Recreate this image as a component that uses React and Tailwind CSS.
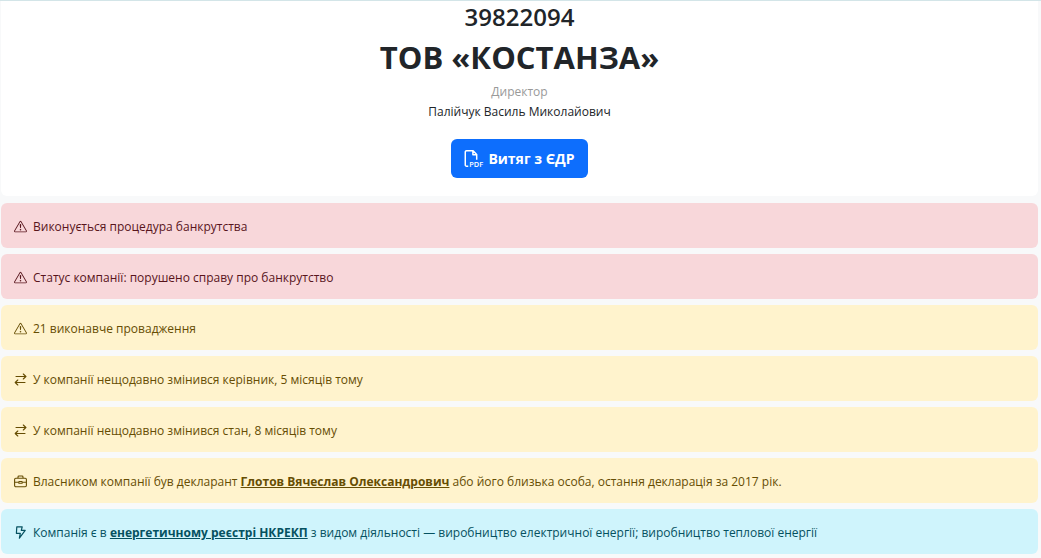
import { BsExclamationTriangle } from 'react-icons/bs';

const TONES = {
    danger: 'bg-[#f8d7da] text-[#58151c]',
    warning: 'bg-[#fff3cd] text-[#664d03]',
    info: 'bg-[#cff4fc] text-[#055160]',
};

const ALERTS = [
    { id: 'bankruptcy', tone: 'danger', icon: BsExclamationTriangle, text: 'Виконується процедура банкрутства' },
    { id: 'status', tone: 'danger', icon: BsExclamationTriangle, text: 'Статус компанії: порушено справу про банкрутство' },
    { id: 'enforcement', tone: 'warning', icon: BsExclamationTriangle, text: '21 виконавче провадження' },
    { id: 'director', tone: 'warning', icon: SwapIcon, text: 'У компанії нещодавно змінився керівник, 5 місяців тому' },
    { id: 'state', tone: 'warning', icon: SwapIcon, text: 'У компанії нещодавно змінився стан, 8 місяців тому' },
    {
        id: 'owner',
        tone: 'warning',
        icon: BriefcaseIcon,
        text: (
            <>
                Власником компанії був декларант <AlertLink>Глотов Вячеслав Олександрович</AlertLink> або його близька особа, остання декларація за 2017 рік.
            </>
        ),
    },
    {
        id: 'energy',
        tone: 'info',
        icon: BoltIcon,
        text: (
            <>
                Компанія є в <AlertLink>енергетичному реєстрі НКРЕКП</AlertLink> з видом діяльності — виробництво електричної енергії; виробництво теплової енергії
            </>
        ),
    },
];

function SwapIcon(props) {
    return (
        <svg viewBox="0 0 13 13" fill="none" stroke="currentColor" strokeWidth="1.1" strokeLinecap="round" strokeLinejoin="round" {...props}>
            <path d="M2 3.5h10M9.3 1l2.6 2.5L9.3 6M11 9.5H1.2M3.8 7 1.2 9.5 3.8 12" />
        </svg>
    );
}

function BriefcaseIcon(props) {
    return (
        <svg viewBox="0 0 13 13" fill="none" stroke="currentColor" strokeWidth="1.1" strokeLinejoin="round" {...props}>
            <rect x="0.6" y="3.2" width="11.8" height="8.6" rx="1.2" />
            <path d="M4 3V1.9c0-.5.3-.9.9-.9h3.2c.6 0 .9.4.9.9V3M.6 7.3h4M8.4 7.3h4" />
            <rect x="4.8" y="6.5" width="3.4" height="1.8" rx="0.4" />
        </svg>
    );
}

function BoltIcon(props) {
    return (
        <svg viewBox="0 0 13 13" fill="none" stroke="currentColor" strokeWidth="1.2" strokeLinejoin="round" {...props}>
            <path d="M2.8.8h5.4L7.3 4.4h3.9L5.4 12.2l.9-4.9H2.4z" />
        </svg>
    );
}

function PdfIcon(props) {
    return (
        <svg viewBox="0 0 17 17" fill="none" stroke="currentColor" strokeWidth="1.4" strokeLinejoin="round" overflow="visible" {...props}>
            <path d="M4 15.3H2.4a1.2 1.2 0 0 1-1.2-1.2V1.9A1.2 1.2 0 0 1 2.4.7h6.2L12 4.2v5M8.4.9v3.5h3.5" />
            <text x="5" y="16" fill="currentColor" stroke="none" fontSize="7" fontWeight="600">
                PDF
            </text>
        </svg>
    );
}

function AlertLink({ children }) {
    return (
        <a href="#" className="font-bold underline">
            {children}
        </a>
    );
}

function Alert({ tone, icon: Icon, children }) {
    return (
        <div role="alert" className={`flex items-center gap-1.5 rounded-md px-[13px] pt-[13px] pb-[11px] text-xs leading-[21px] ${TONES[tone]}`}>
            <Icon className="size-[13px] shrink-0" aria-hidden="true" />
            <p>{children}</p>
        </div>
    );
}

export default function App() {
    return (
        <div className="min-h-screen border-t border-[#d3e5e8] bg-[#f8f9fa] pr-[3px] pl-px font-['Open_Sans',sans-serif] text-[#212529]">
            <header className="flex flex-col items-center rounded-b-md bg-white pb-[18px] text-center">
                <h2 className="text-2xl leading-[31px] font-semibold">39822094</h2>
                <h1 className="text-[31px] leading-[50px] font-bold">ТОВ «КОСТАНЗА»</h1>
                <p className="text-xs leading-5 text-[#999999]">Директор</p>
                <p className="text-xs leading-5">Палійчук Василь Миколайович</p>
                <button type="button" className="mt-[17px] flex h-[39px] items-center gap-1.5 rounded-md bg-[#0d6efd] px-[13px] text-sm font-bold text-white">
                    <PdfIcon className="size-[18px]" aria-hidden="true" />
                    Витяг з ЄДР
                </button>
            </header>
            <main className="mt-[7px] flex flex-col gap-1.5">
                {ALERTS.map(({ id, tone, icon, text }) => (
                    <Alert key={id} tone={tone} icon={icon}>
                        {text}
                    </Alert>
                ))}
            </main>
        </div>
    );
}
